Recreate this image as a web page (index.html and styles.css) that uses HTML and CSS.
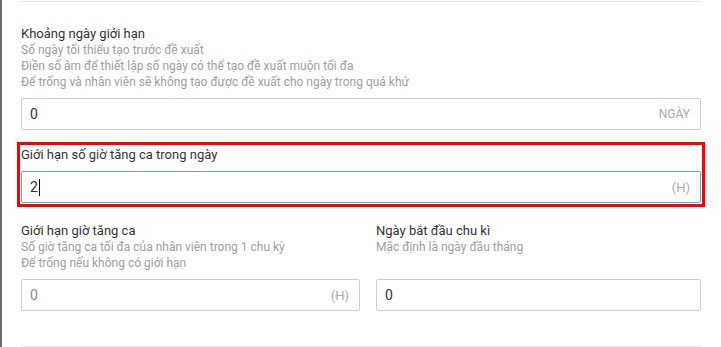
FILE: index.html
```html
<!DOCTYPE html>
<html lang="vi">
<head>
    <meta charset="UTF-8">
    <meta name="viewport" content="width=device-width, initial-scale=1.0">
    <title>Cài đặt tăng ca</title>
    <link rel="stylesheet" href="styles.css">
</head>
<body>
    <div class="panel">
        <div class="divider"></div>

        <!-- Khoảng ngày giới hạn -->
        <div class="field first">
            <div class="label">Khoảng ngày giới hạn</div>
            <div class="help">
                Số ngày tối thiểu tạo trước đề xuất<br>
                Điền số âm để thiết lập số ngày có thể tạo đề xuất muộn tối đa<br>
                Để trống và nhân viên sẽ không tạo được đề xuất cho ngày trong quá khứ
            </div>
            <div class="input">
                <span class="value">0</span>
                <span class="suffix upper">Ngày</span>
            </div>
        </div>

        <!-- Giới hạn trong ngày (đang chọn) -->
        <div class="field highlight">
            <div class="label">Giới hạn số giờ tăng ca trong ngày</div>
            <div class="input focused">
                <span class="value">2<span class="caret"></span></span>
                <span class="suffix">(H)</span>
            </div>
        </div>

        <div class="row">
            <div class="field">
                <div class="label">Giới hạn giờ tăng ca</div>
                <div class="help">
                    Số giờ tăng ca tối đa của nhân viên trong 1 chu kỳ<br>
                    Để trống nếu không có giới hạn
                </div>
                <div class="input">
                    <span class="value muted">0</span>
                    <span class="suffix">(H)</span>
                </div>
            </div>
            <div class="field">
                <div class="label">Ngày bắt đầu chu kì</div>
                <div class="help">Mặc định là ngày đầu tháng</div>
                <div class="input">
                    <span class="value">0</span>
                </div>
            </div>
        </div>

        <div class="divider bottom"></div>
    </div>
</body>
</html>
```

FILE: styles.css
```css
/* General */
body, html {
    margin: 0;
    padding: 0;
    background: #fff;
    font-family: Roboto, "Liberation Sans", Arial, sans-serif;
    color: #333;
}

.panel {
    height: 347px;
    box-sizing: border-box;
    border-left: 2px solid #6b6b6b;
    padding: 1px 20px 0 19px;
}

.divider {
    height: 1px;
    background: #e4e4e4;
}

.divider.bottom {
    margin-top: 35px;
}

/* Fields */
.field {
    display: flex;
    flex-direction: column;
}

.field.first {
    margin-top: 24px;
}

.label {
    font-size: 13px;
    line-height: 16px;
    color: #333;
}

.help {
    font-size: 12px;
    line-height: 16px;
    color: #a0a0a0;
}

.input {
    margin-top: 8px;
    height: 32px;
    box-sizing: border-box;
    border: 1px solid #cfcfcf;
    border-radius: 2px;
    display: flex;
    align-items: center;
    justify-content: space-between;
    padding: 0 10px 0 8px;
    font-size: 14px;
}

.input.focused {
    border-color: #66a6e6;
}

.value {
    color: #333;
    display: flex;
    align-items: center;
}

.value.muted {
    color: #8a8a8a;
}

.caret {
    display: inline-block;
    width: 1px;
    height: 17px;
    margin-left: 1px;
    background: #111;
}

.suffix {
    font-size: 13px;
    color: #ababab;
}

.suffix.upper {
    font-size: 12px;
    text-transform: uppercase;
}

/* Selected field */
.highlight {
    margin: 12px -4px 16px;
    padding: 2px 1px 1px;
    border: 3px solid #ff0000;
}

/* Two columns */
.row {
    display: grid;
    grid-template-columns: 339px 325px;
    gap: 16px;
}

.row .input {
    margin-top: auto;
}

.row .help {
    margin-bottom: 8px;
}
```
